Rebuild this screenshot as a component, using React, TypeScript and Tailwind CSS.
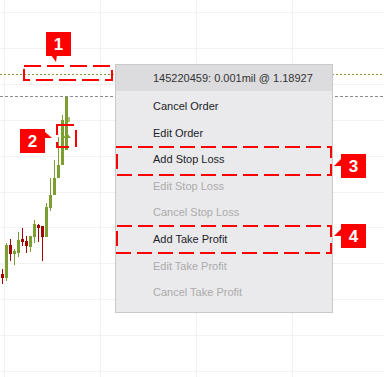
import React from 'react'

type Candle = { x: number; up: boolean; o: number; c: number; hi: number; lo: number }

// body top/bottom (o/c) and wick top/bottom (hi/lo) in page pixels
const candles: Candle[] = [
  { x: 1, up: false, o: 274, c: 278, hi: 269, lo: 284 },
  { x: 5, up: true, o: 245, c: 278, hi: 243, lo: 281 },
  { x: 9, up: false, o: 245, c: 254, hi: 239, lo: 261 },
  { x: 13, up: true, o: 251, c: 254, hi: 249, lo: 265 },
  { x: 17, up: true, o: 240, c: 253, hi: 232, lo: 257 },
  { x: 21, up: false, o: 239, c: 242, hi: 228, lo: 246 },
  { x: 25, up: false, o: 241, c: 246, hi: 236, lo: 253 },
  { x: 29, up: true, o: 236, c: 247, hi: 236, lo: 252 },
  { x: 33, up: true, o: 224, c: 237, hi: 220, lo: 243 },
  { x: 37, up: false, o: 225, c: 228, hi: 224, lo: 242 },
  { x: 41, up: false, o: 226, c: 237, hi: 226, lo: 261 },
  { x: 45, up: true, o: 207, c: 237, hi: 203, lo: 237 },
  { x: 49, up: true, o: 195, c: 208, hi: 178, lo: 211 },
  { x: 53, up: true, o: 178, c: 195, hi: 160, lo: 195 },
  { x: 57, up: true, o: 165, c: 178, hi: 137, lo: 178 },
  { x: 61, up: true, o: 120, c: 165, hi: 115, lo: 165 },
  { x: 65, up: true, o: 97, c: 150, hi: 97, lo: 150 },
]

const GREEN = '#7c9e31'
const RED = '#a30000'

function Chart() {
  const vLines = [4, 100, 196, 292]
  const hLines = Array.from({ length: 11 }, (_, i) => 12 + i * 35.9)
  return (
    <svg className="absolute inset-0" width={384} height={377} viewBox="0 0 384 377">
      {vLines.map(x => (
        <line key={'v' + x} x1={x + 0.5} y1={0} x2={x + 0.5} y2={377} stroke="#f2f2f2" strokeWidth={1} />
      ))}
      {hLines.map(y => (
        <line key={'h' + y} x1={0} y1={Math.round(y) + 0.5} x2={384} y2={Math.round(y) + 0.5} stroke="#f2f2f2" strokeWidth={1} />
      ))}

      {/* order line + current price line */}
      <line x1={0} y1={74.5} x2={384} y2={74.5} stroke="#8a9c3a" strokeWidth={1} strokeDasharray="2 2" />
      <line x1={0} y1={96.5} x2={384} y2={96.5} stroke="#8c8c8c" strokeWidth={1} strokeDasharray="3 2" />

      {candles.map(c => {
        const col = c.up ? GREEN : RED
        return (
          <g key={c.x}>
            <line x1={c.x + 1.5} y1={c.hi} x2={c.x + 1.5} y2={c.lo} stroke={col} strokeWidth={1} />
            <rect x={c.x} y={c.o} width={3} height={Math.max(c.c - c.o, 2)} fill={col} />
          </g>
        )
      })}
      <rect x={68} y={117} width={2} height={5} fill="#a9c070" />
      <polygon points="63,138 71,138 67,133" fill={GREEN} />
    </svg>
  )
}

const items = [
  { label: 'Cancel Order', on: true },
  { label: 'Edit Order', on: true },
  { label: 'Add Stop Loss', on: true },
  { label: 'Edit Stop Loss', on: false },
  { label: 'Cancel Stop Loss', on: false },
  { label: 'Add Take Profit', on: true },
  { label: 'Edit Take Profit', on: false },
  { label: 'Cancel Take Profit', on: false },
]

function OrderMenu() {
  return (
    <div
      className="absolute left-[115px] top-[64px] w-[218px] h-[249px] border border-[#c9c9c9] bg-[#eaeaec] text-[11px]"
      style={{ fontFamily: '"Liberation Sans", Arial, sans-serif' }}
    >
      <div className="h-[26px] bg-[#dcdcde] flex items-center pl-[37px] text-[#333]">
        145220459: 0.001mil @ 1.18927
      </div>
      <div className="pt-[2px]">
        {items.map(it => (
          <div
            key={it.label}
            className={
              'h-[26.6px] flex items-center pl-[37px] ' + (it.on ? 'text-[#1c1c2a]' : 'text-[#ababab]')
            }
          >
            {it.label}
          </div>
        ))}
      </div>
    </div>
  )
}

function Badge({ n, className }: { n: string; className: string }) {
  return (
    <div
      className={'absolute w-[25px] h-[24px] bg-[#ff0000] text-white font-bold text-[17px] leading-none flex items-center justify-center ' + className}
      style={{ fontFamily: '"Liberation Sans", Arial, sans-serif' }}
    >
      {n}
    </div>
  )
}

function Callouts() {
  const dash = '15 6'
  return (
    <>
      <svg className="absolute inset-0" width={384} height={377} viewBox="0 0 384 377">
        <g fill="none" stroke="#ff0000" strokeWidth={2}>
          <rect x={24} y={66} width={88} height={14} strokeDasharray="17 6" />
          <rect x={57} y={125} width={19} height={22} strokeDasharray="17 7" />
          <rect x={117} y={147} width={214} height={28} strokeDasharray={dash} />
          <rect x={117} y={226} width={214} height={27} strokeDasharray={dash} />
        </g>
        <g fill="#ff0000">
          <polygon points="51,55 57,55 56,62" />
          <polygon points="45,132 45,138 52,138" />
          <polygon points="341,159 341,166 334,166" />
          <polygon points="341,229 341,236 334,236" />
        </g>
      </svg>
      <Badge n="1" className="left-[46px] top-[32px]" />
      <Badge n="2" className="left-[20px] top-[129px]" />
      <Badge n="3" className="left-[341px] top-[154px]" />
      <Badge n="4" className="left-[341px] top-[224px]" />
    </>
  )
}

export default function App() {
  return (
    <div className="relative w-[384px] h-[377px] bg-white overflow-hidden">
      <Chart />
      <OrderMenu />
      <Callouts />
    </div>
  )
}
